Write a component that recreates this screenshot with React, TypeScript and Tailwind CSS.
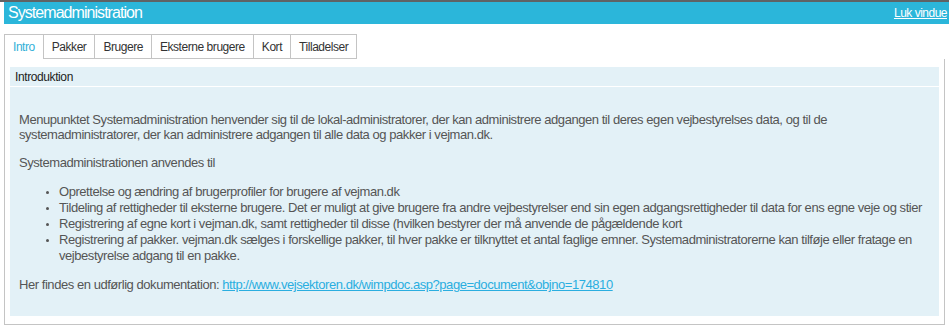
import React from "react";

const tabs = ["Intro", "Pakker", "Brugere", "Eksterne brugere", "Kort", "Tilladelser"];

export default function App() {
  return (
    <div className="w-[949px] h-[330px] bg-white overflow-hidden" style={{ fontFamily: '"Liberation Sans", Arial, sans-serif' }}>
      <div className="h-[2px] bg-[#5f6365]" />
      <div className="ml-[4px] h-[22px] bg-[#2bb6da] flex items-center justify-between pl-[4px] pr-[2px]">
        <span className="text-white text-[16px] tracking-[-0.95px] leading-none">Systemadministration</span>
        <a href="#" className="text-white text-[12px] tracking-[-0.5px] underline leading-none">Luk vindue</a>
      </div>
      <div className="ml-[4px] mt-[10px] flex h-[25px]">
        {tabs.map((t, i) => (
          <div
            key={t}
            className={
              "h-[25px] px-[8px] flex items-center text-[12px] tracking-[-0.45px] border-t border-r border-[#c4c4c4] " +
              (i === 0 ? "border-l text-[#33b0d8] bg-white" : "border-b text-[#333]")
            }
          >
            {t}
          </div>
        ))}
        <div className="flex-1" />
      </div>
      <div className="ml-[4px] w-[941px] h-[266px] border border-t-0 border-[#c4c4c4] px-[5px] pt-[8px] pb-[8px] flex flex-col">
        <div className="h-[19px] bg-[#e3f1f7] pl-[5px] flex items-center text-[12px] tracking-[-0.4px] text-[#222]">Introduktion</div>
        <div className="mt-[1px] flex-1 bg-[#e3f1f7] pl-[9px] pt-[25px] text-[13px] tracking-[-0.45px] text-[#555] leading-[15px]">
          <p>
            Menupunktet Systemadministration henvender sig til de lokal-administratorer, der kan administrere adgangen til deres egen vejbestyrelses data, og til de systemadministratorer, der kan administrere adgangen til alle data og pakker i vejman.dk.
          </p>
          <p className="mt-[13px]">Systemadministrationen anvendes til</p>
          <ul className="mt-[14px] pl-[40px] list-disc leading-[16px] marker:text-[10px]">
            <li>Oprettelse og ændring af brugerprofiler for brugere af vejman.dk</li>
            <li>Tildeling af rettigheder til eksterne brugere. Det er muligt at give brugere fra andre vejbestyrelser end sin egen adgangsrettigheder til data for ens egne veje og stier</li>
            <li>Registrering af egne kort i vejman.dk, samt rettigheder til disse (hvilken bestyrer der må anvende de pågældende kort</li>
            <li>Registrering af pakker. vejman.dk sælges i forskellige pakker, til hver pakke er tilknyttet et antal faglige emner. Systemadministratorerne kan tilføje eller fratage en vejbestyrelse adgang til en pakke.</li>
          </ul>
          <p className="mt-[13px]">
            Her findes en udførlig dokumentation:{" "}
            <a href="#" className="text-[#2aaee0] underline">http://www.vejsektoren.dk/wimpdoc.asp?page=document&amp;objno=174810</a>
          </p>
        </div>
      </div>
    </div>
  );
}
